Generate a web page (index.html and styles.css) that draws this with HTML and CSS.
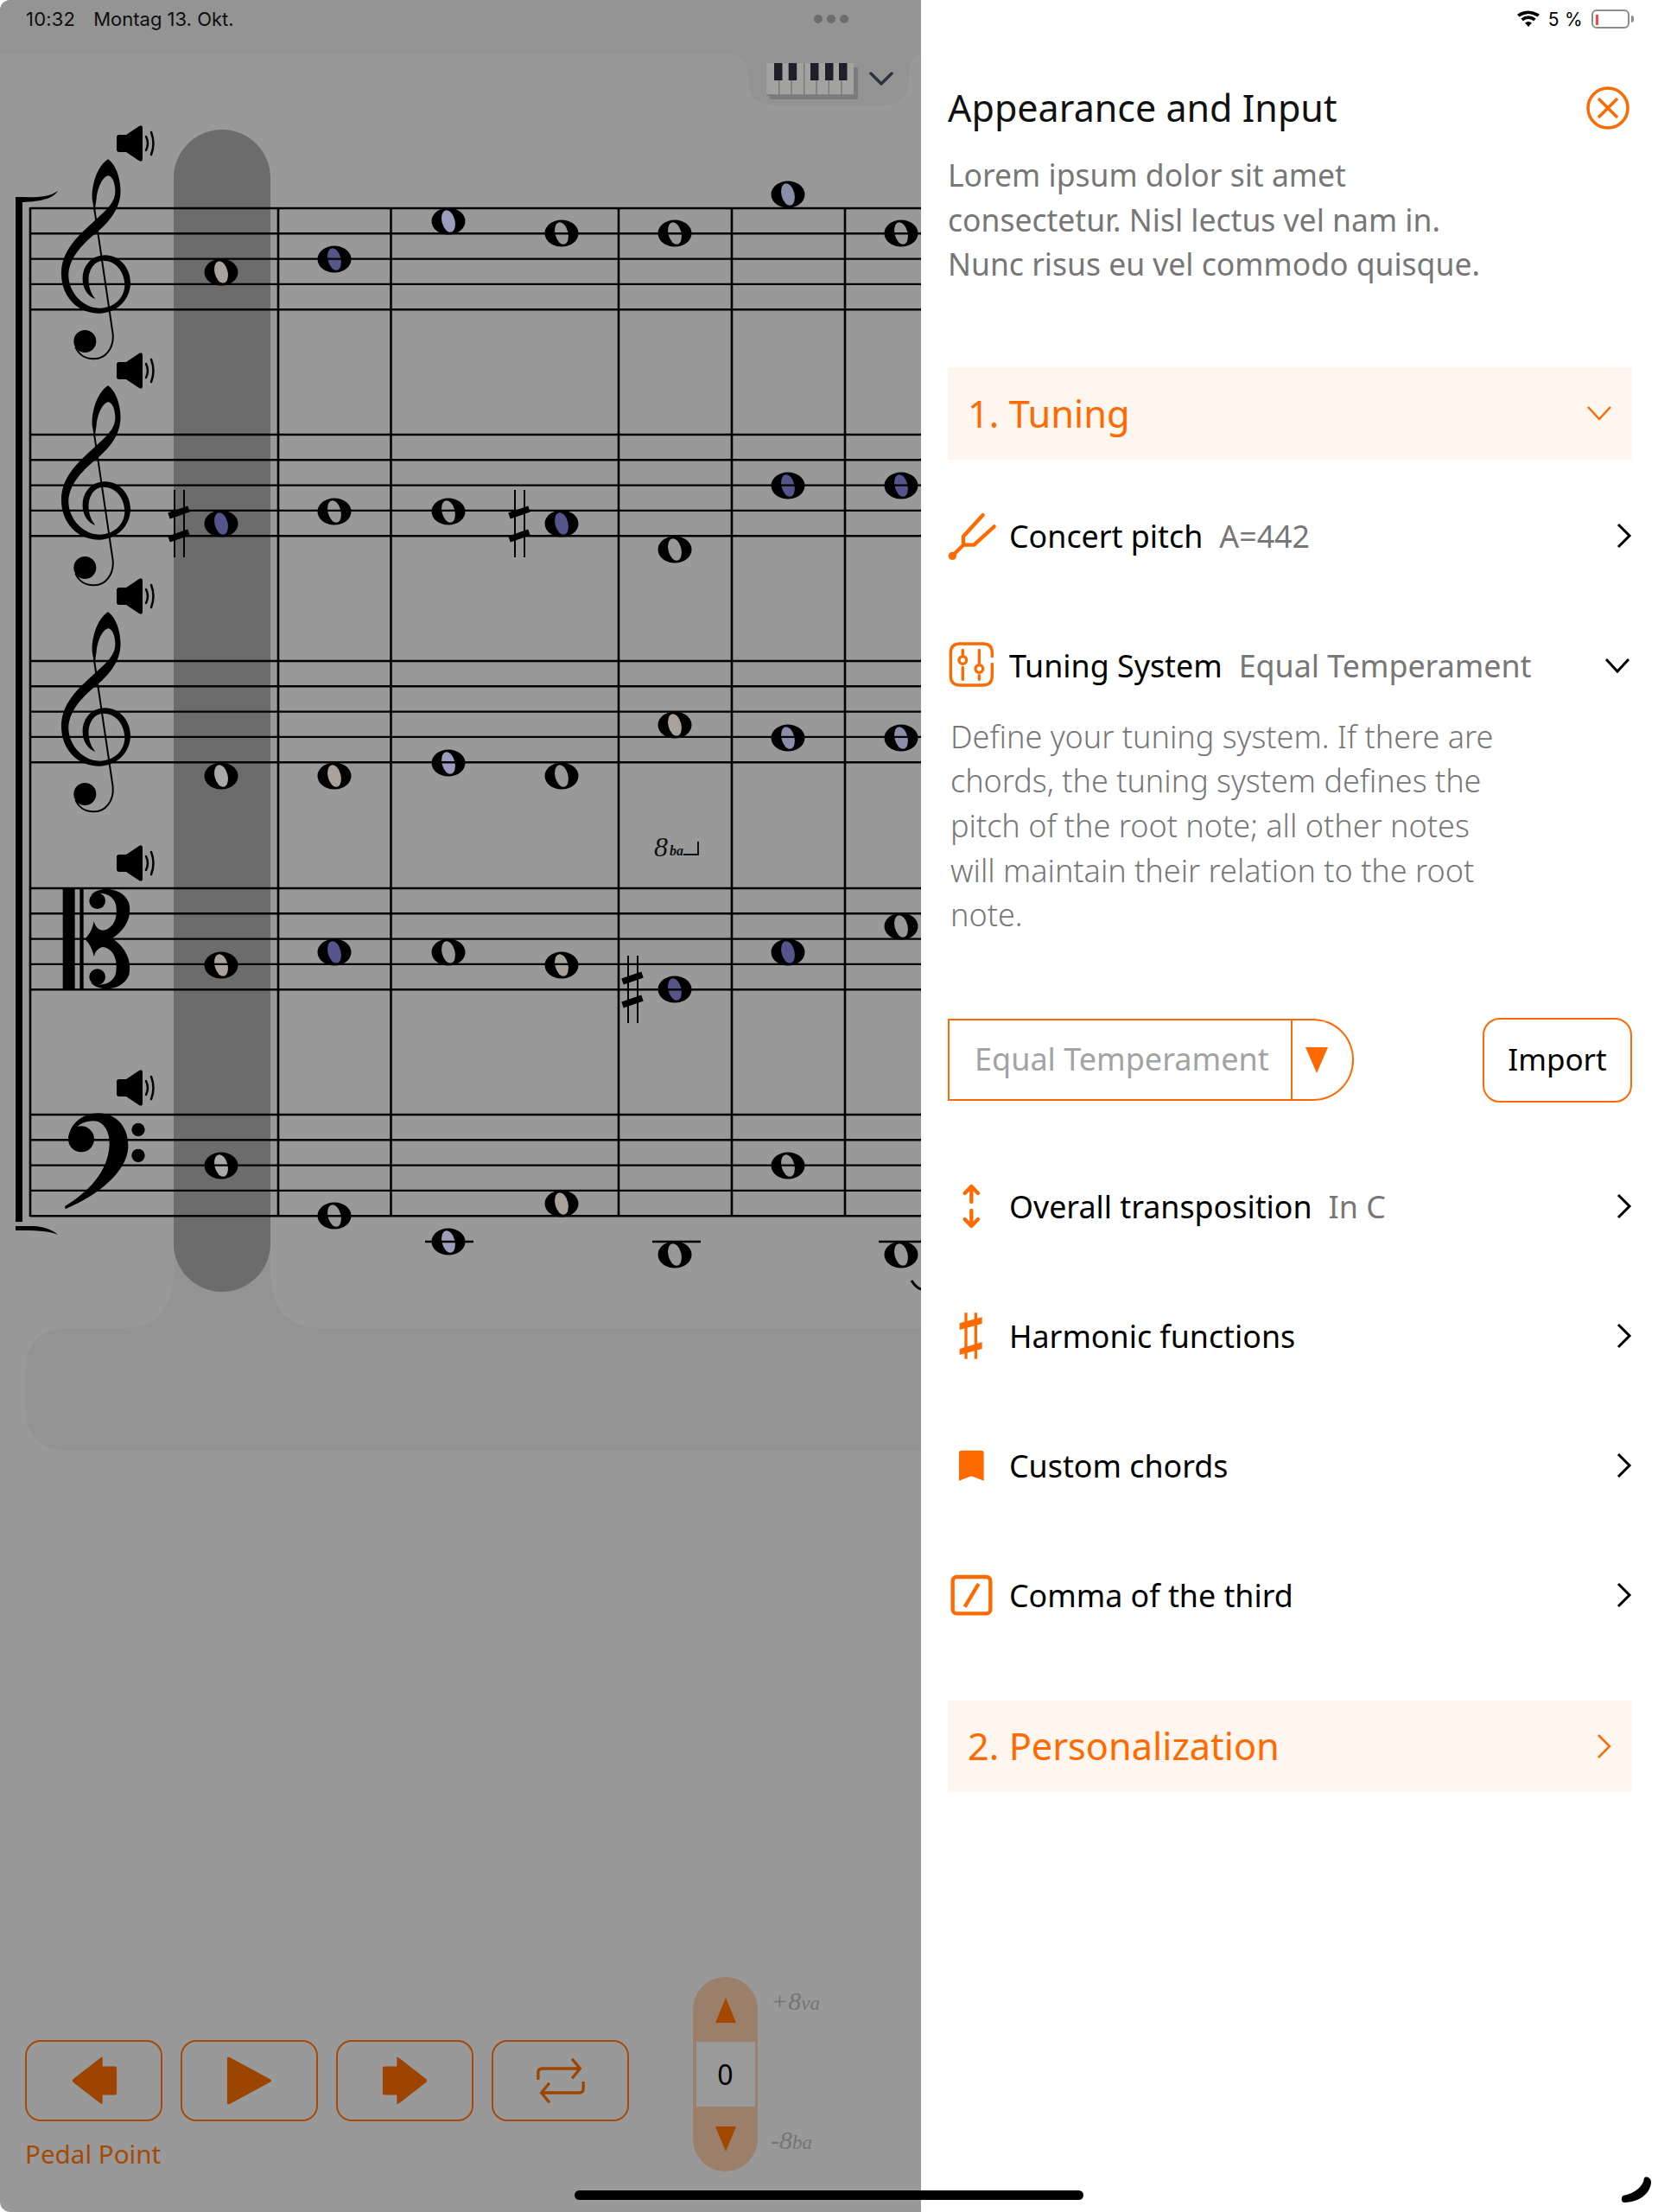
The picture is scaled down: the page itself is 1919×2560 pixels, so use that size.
FILE: index.html
```html
<!DOCTYPE html>
<html lang="en">
<head>
<meta charset="utf-8">
<title>Appearance and Input</title>
<link rel="stylesheet" href="styles.css">
</head>
<body>
<div class="screen">
  <section class="score-pane">
    <header class="sys-left">
      <span class="time">10:32</span><span class="date">Montag 13. Okt.</span>
      <span class="dots"><i></i><i></i><i></i></span>
    </header>
    <svg class="score" width="1066" height="1618" viewBox="0 62 1066 1618" xmlns="http://www.w3.org/2000/svg">
      <defs>
        <g id="staff" class="lines">
          <path d="M35 0H1066M35 29.3H1066M35 58.6H1066M35 87.9H1066M35 117.2H1066"/>
        </g>
        <g id="note">
          <ellipse rx="19.5" ry="15.5" class="note-head"/>
          <ellipse rx="7.5" ry="13" transform="rotate(-14)" fill="currentColor"/>
        </g>
        <g id="sharp">
          <path class="sharp-v" d="M-5 -39V39M6 -39V39"/>
          <path class="sharp-b" d="M-11.500 -9L11.500 -17M-11.500 18L11.500 10"/>
        </g>
        <g id="speaker">
          <path class="solid" d="M0 -10H8L23 -20Q27 -22 27 -18V18Q27 22 23 20L8 10H0Q-3 10 -3 7V-7Q-3 -10 0 -10Z"/>
          <path class="spk-arc" d="M31 -8Q35 0 31 8M37 -13Q42 0 37 13"/>
        </g>
        <g id="treble" transform="scale(.3333)">
          <path class="solid" fill-rule="evenodd" d="M345 133C372 150 392 205 388 255C384 310 345 355 300 392C265 420 212 470 208 530C205 590 255 650 315 650C370 650 405 610 403 565C400 520 370 485 330 485C295 485 275 520 278 560C280 590 295 610 302 618C275 610 255 580 257 545C258 500 290 466 335 466C385 466 423 510 423 562C423 620 375 668 315 668C240 668 183 610 183 530C183 450 240 400 300 345C345 305 372 280 370 240C368 210 358 190 345 190C325 195 308 235 305 270L298 318L290 270C288 210 315 150 345 133Z"/>
          <path class="clef-stem" d="M297 300L362 740C366 790 335 828 295 826C265 825 245 815 232 785"/>
          <circle class="solid" cx="265" cy="765" r="39"/>
        </g>
      </defs>

      <path class="bar-shape" d="M1066 1537H372Q313 1537 313 1470V1300H201V1470Q201 1537 142 1537H80Q30 1537 30 1587V1629Q30 1679 80 1679H1066Z"/>
      <path class="bar-shape" d="M840 62Q866 62 866 88V92Q866 122 896 122H1022Q1052 122 1052 92V88Q1052 62 1066 62Z"/>
      <rect class="column" x="201" y="150" width="112" height="1345" rx="56"/>

      <g class="keys">
        <rect class="key-shadow" x="891" y="78" width="102" height="37" rx="2"/>
        <rect class="key-white" x="887" y="73" width="101" height="37"/>
        <path class="key-line" d="M901.700 92V110M916 92V110M930.700 73V110M945 92V110M959.300 92V110M974 92V110M887 110H988"/>
        <rect class="key-black" x="896" y="73" width="9.500" height="20"/>
        <rect class="key-black" x="912.700" y="73" width="9.500" height="20"/>
        <rect class="key-black" x="938" y="73" width="9.500" height="20"/>
        <rect class="key-black" x="955" y="73" width="9.500" height="20"/>
        <rect class="key-black" x="971" y="73" width="9.500" height="20"/>
      </g>
      <path class="keys-chev" d="M1008 85L1020 97L1032 85"/>

      <use href="#note" x="256" y="315" class="beige"/><use href="#note" x="387" y="300" class="blue"/><use href="#note" x="519" y="256" class="lilac"/><use href="#note" x="650" y="270" class="plain"/><use href="#note" x="781" y="270" class="plain"/><use href="#note" x="912" y="225" class="mauve"/><use href="#note" x="1043" y="270" class="plain"/>
      <use href="#note" x="256" y="606" class="blue"/><use href="#note" x="387" y="592" class="plain"/><use href="#note" x="519" y="592" class="plain"/><use href="#note" x="650" y="606" class="blue"/><use href="#note" x="781" y="636" class="plain"/><use href="#note" x="912" y="562" class="blue"/><use href="#note" x="1043" y="562" class="blue"/>
      <use href="#note" x="256" y="898" class="pale"/><use href="#note" x="387" y="898" class="beige"/><use href="#note" x="519" y="883" class="lilac"/><use href="#note" x="650" y="898" class="plain"/><use href="#note" x="781" y="839" class="beige"/><use href="#note" x="912" y="854" class="mauve"/><use href="#note" x="1043" y="854" class="mauve"/>
      <use href="#note" x="256" y="1117" class="beige"/><use href="#note" x="387" y="1102" class="blue"/><use href="#note" x="519" y="1102" class="plain"/><use href="#note" x="650" y="1117" class="beige"/><use href="#note" x="781" y="1145" class="blue"/><use href="#note" x="912" y="1102" class="blue"/><use href="#note" x="1043" y="1072" class="plain"/>
      <use href="#note" x="256" y="1349" class="pale"/><use href="#note" x="387" y="1407" class="plain"/><use href="#note" x="519" y="1437" class="lilac"/><use href="#note" x="650" y="1393" class="beige"/><use href="#note" x="781" y="1452" class="plain"/><use href="#note" x="912" y="1349" class="plain"/><use href="#note" x="1043" y="1452" class="plain"/>

      <use href="#staff" y="241"/><use href="#staff" y="503"/><use href="#staff" y="765"/><use href="#staff" y="1028"/><use href="#staff" y="1290"/>
      <path class="barlines" d="M35 240V1408M322 240V1408M452.500 240V1408M716 240V1408M847 240V1408M978 240V1408"/>
      <path class="ledger" d="M492 1437H548M755 1437H811M1017 1437H1066"/>
      <path class="tail" d="M1055 1482Q1060 1490 1066 1492"/>

      <path class="solid" d="M18 229H26V1414H18Z"/>
      <path class="solid" d="M18 228C35 228 55 230 67 221C60 232 40 234 18 234Z"/>
      <path class="solid" d="M18 1419H40C52 1420 62 1424 67 1429C55 1424 40 1424 18 1424Z"/>

      <use href="#treble" x="10" y="140"/><use href="#treble" x="10" y="402"/><use href="#treble" x="10" y="664"/>

      <use href="#speaker" x="138" y="166"/>
      <use href="#speaker" x="138" y="429"/>
      <use href="#speaker" x="138" y="690"/>
      <use href="#speaker" x="138" y="999"/>
      <use href="#speaker" x="138" y="1259"/>

      <use href="#sharp" x="207" y="606"/><use href="#sharp" x="601" y="606"/><use href="#sharp" x="732" y="1145"/>

      <g transform="translate(30 960) scale(.3333)">
        <rect class="solid" x="128" y="205" width="42" height="350"/>
        <rect class="solid" x="187" y="205" width="13" height="350"/>
        <path class="solid" d="M225 228C255 195 335 198 358 255C370 310 340 352 300 378C340 405 370 450 358 505C335 562 255 565 225 532C255 545 300 540 312 500C322 450 300 410 265 408C250 412 240 425 236 442C232 415 218 392 205 380C218 368 232 345 236 318C240 335 250 348 265 350C300 348 322 310 312 260C300 220 255 215 225 228Z"/>
        <circle class="solid" cx="248" cy="248" r="28"/><circle class="solid" cx="248" cy="512" r="28"/>
        <path class="solid" d="M148 1075C150 1020 200 985 250 985C320 985 358 1040 355 1105C350 1190 250 1270 137 1318L135 1308C215 1260 285 1190 290 1095C292 1050 270 1012 235 1012C205 1012 178 1025 170 1045Z"/>
        <circle class="solid" cx="192" cy="1075" r="45"/>
        <circle class="solid" cx="390" cy="1042" r="23"/><circle class="solid" cx="390" cy="1132" r="23"/>
      </g>

      <text class="ba-eight" x="757" y="991">8</text>
      <text class="ba-small" x="775" y="990">ba</text>
      <path class="ba-mark" d="M791 989H808V974"/>
    </svg>

    <div class="controls">
      <div class="transport">
        <div class="transport-row">
          <button class="tbtn" type="button"><svg width="56" height="56" viewBox="0 0 54 58"><path class="tfill" d="M37 1V12H52Q54 12 54 14V44Q54 46 52 46H37V56Q36 58 34 56L2 31Q0 29 2 27L34 2Q36 0 37 1Z"/></svg></button>
          <button class="tbtn" type="button"><svg width="56" height="56" viewBox="3 0 54 58"><path class="tfill" d="M3 2V56Q3 58 6 57L54 31Q58 29 54 27L6 1Q3 0 3 2Z"/></svg></button>
          <button class="tbtn" type="button"><svg width="56" height="56" viewBox="10 0 54 58"><path class="tfill" d="M27 1V12H12Q10 12 10 14V44Q10 46 12 46H27V56Q28 58 30 56L62 31Q64 29 62 27L30 2Q28 0 27 1Z"/></svg></button>
          <button class="tbtn" type="button"><svg width="56" height="54" viewBox="0 0 60 56"><path class="tstroke" d="M2 27V18Q2 13 7 13H54M44 1L54 13L44 25M58 29V38Q58 43 53 43H6M16 31L6 43L16 55"/></svg></button>
        </div>
        <div class="pedal">Pedal Point</div>
      </div>
      <div class="stepper">
        <svg class="tri" width="24" height="29" viewBox="0 0 24 29"><path d="M12 0L24 29H0Z"/></svg>
        <div class="stepper-val">0</div>
        <svg class="tri" width="24" height="29" viewBox="0 0 24 29"><path d="M0 0H24L12 29Z"/></svg>
      </div>
      <div class="octaves">
        <div class="oct">+8<small>va</small></div>
        <div class="oct">-8<small>ba</small></div>
      </div>
    </div>
  </section>

  <aside class="panel">
    <div class="sys-right">
      <svg width="26" height="18" viewBox="0 0 26 18"><path class="solid" d="M13 18L9 13.500Q13 10.500 17 13.500ZM6.800 11.300L4.300 8.500Q13 1.800 21.700 8.500L19.200 11.300Q13 6.500 6.800 11.300ZM2.500 6.500L0 3.700Q13 -4.500 26 3.700L23.500 6.500Q13 -.5 2.500 6.500Z"/></svg>
      <span class="pct">5 %</span>
      <span class="battery"><i></i></span><span class="nub"></span>
    </div>
    <div class="head">
      <h1>Appearance and Input</h1>
      <svg class="close" width="50" height="50" viewBox="0 0 50 50"><circle cx="25" cy="25" r="23"/><path d="M14 14L36 36M36 14L14 36"/></svg>
    </div>
    <p class="desc">Lorem ipsum dolor sit amet<br>consectetur. Nisl lectus vel nam in.<br>Nunc risus eu vel commodo quisque.</p>

    <div class="section sec-one">
      <span class="sec-title">1. Tuning</span>
      <svg width="28" height="16" viewBox="0 0 28 16"><path class="chev-o" d="M1 1L14 15L27 1"/></svg>
    </div>

    <div class="row row-first">
      <svg class="ico" width="54" height="54" viewBox="21 9 162 162"><circle class="ifill" cx="37" cy="160" r="14"/><path class="istroke" d="M37 160L75 122V92L143 18M75 122H112L182 58"/></svg>
      <span class="lbl">Concert pitch</span><span class="val">A=442</span>
      <svg class="chev" width="18" height="30" viewBox="0 0 18 30"><path d="M2 2L15 15L2 28"/></svg>
    </div>

    <div class="row row-open">
      <svg class="ico" width="54" height="54" viewBox="21 462 162 162"><path class="istroke thin" d="M175 512V500Q175 468 143 468H63Q31 468 31 500V580Q31 612 63 612H143Q175 612 175 580V538M73 490V505M73 550V592M130 490V538M130 578V592"/><circle class="istroke thin" cx="73" cy="525" r="13"/><circle class="istroke thin" cx="130" cy="555" r="13"/></svg>
      <span class="lbl">Tuning System</span><span class="val">Equal Temperament</span>
      <svg class="chev-d" width="30" height="18" viewBox="0 0 30 18"><path d="M2 2L15 16L28 2"/></svg>
    </div>
    <p class="help">Define your tuning system. If there are<br>chords, the tuning system defines the<br>pitch of the root note; all other notes<br>will maintain their relation to the root<br>note.</p>

    <div class="picker">
      <div class="select">
        <div class="select-text">Equal Temperament</div>
        <div class="select-arrow"><svg width="26" height="30" viewBox="0 0 26 30"><path d="M0 0H26L13 30Z"/></svg></div>
      </div>
      <button class="import" type="button">Import</button>
    </div>

    <div class="row row-after">
      <svg class="ico" width="54" height="54" viewBox="21 24 162 162"><path class="istroke" d="M103 90V38M80 60L103 36L126 60M103 120V172M80 150L103 174L126 150"/></svg>
      <span class="lbl">Overall transposition</span><span class="val">In C</span>
      <svg class="chev" width="18" height="30" viewBox="0 0 18 30"><path d="M2 2L15 15L2 28"/></svg>
    </div>
    <div class="row row-next">
      <svg class="ico" width="54" height="54" viewBox="21 459 162 162"><path class="istroke thin butt" d="M84 460V620M118 460V620"/><path class="ifill" d="M62 496L140 475V498L62 519ZM62 585L140 562V585L62 606Z"/></svg>
      <span class="lbl">Harmonic functions</span>
      <svg class="chev" width="18" height="30" viewBox="0 0 18 30"><path d="M2 2L15 15L2 28"/></svg>
    </div>
    <div class="row row-next">
      <svg class="ico" width="54" height="54" viewBox="21 892 162 162"><path class="ifill" d="M68 921H138Q146 921 146 929V1026L103 1010L60 1026V929Q60 921 68 921Z"/></svg>
      <span class="lbl">Custom chords</span>
      <svg class="chev" width="18" height="30" viewBox="0 0 18 30"><path d="M2 2L15 15L2 28"/></svg>
    </div>
    <div class="row row-next">
      <svg class="ico" width="54" height="54" viewBox="21 1330 162 162"><rect class="istroke heavy" x="38" y="1348" width="131" height="127" rx="14"/><path class="istroke heavy butt" d="M128 1372L80 1452"/></svg>
      <span class="lbl">Comma of the third</span>
      <svg class="chev" width="18" height="30" viewBox="0 0 18 30"><path d="M2 2L15 15L2 28"/></svg>
    </div>

    <div class="section sec-two">
      <span class="sec-title">2. Personalization</span>
      <svg width="18" height="30" viewBox="0 0 18 30"><path class="chev-o" d="M2 2L15 15L2 28"/></svg>
    </div>
  </aside>

  <div class="home-bar"></div>
  <svg class="pencil" width="34" height="30" viewBox="0 0 34 30"><path d="M26 1C25 10 16 18 2 21C-1 22 -1 29 3 29C20 29 34 18 34 5C34 0 27 -2 26 1Z"/></svg>
</div>
</body>
</html>
```

FILE: styles.css
```css
* { box-sizing: border-box; }
html, body { margin: 0; padding: 0; background: #fff; }
body { font-family: "Noto Sans", "Lato", sans-serif; color: #000; }
svg { display: block; overflow: visible; }

.screen { position: relative; display: flex; width: 1919px; height: 2560px; overflow: hidden; background: #fff; }

/* left dimmed score */
.score-pane { width: 1066px; height: 2560px; background: #999; border-radius: 12px 0 0 12px; overflow: hidden; }
.sys-left { display: flex; align-items: center; height: 62px; padding: 0 84px 18px 30px; background: #949494; font-family: "Inter", "Roboto", sans-serif; font-size: 22px; color: #0e0e0e; }
.time { letter-spacing: .2px; }
.date { margin-left: 21px; }
.dots { display: flex; gap: 5px; margin-left: auto; }
.dots i { display: block; width: 10px; height: 10px; border-radius: 50%; background: #6c6c6c; }

.solid { fill: #000; }
.bar-shape { fill: #939393; }
.column { fill: #6c6c6c; }
.lines path { stroke: #000; stroke-width: 2.4; fill: none; }
.barlines { stroke: #000; stroke-width: 2.6; fill: none; }
.ledger { stroke: #000; stroke-width: 2.4; fill: none; }
.tail { stroke: #000; stroke-width: 3; fill: none; }
.note-head { fill: #000; }
.plain { color: #999; }
.pale { color: #a9a9a9; }
.beige { color: #a9a29b; }
.lilac { color: #9c9cbc; }
.mauve { color: #8c8cab; }
.blue { color: #55558c; }
.sharp-v { stroke: #000; stroke-width: 2; fill: none; }
.sharp-b { stroke: #000; stroke-width: 7.500; fill: none; }
.spk-arc { stroke: #000; stroke-width: 2.500; fill: none; stroke-linecap: round; }
.clef-stem { stroke: #000; stroke-width: 6; fill: none; }
.key-shadow { fill: #7b7b7b; }
.key-white { fill: #a2a2a0; }
.key-line { stroke: #7b7b7b; stroke-width: 1.500; fill: none; }
.key-black { fill: #1f1f2a; }
.keys-chev { stroke: #2e343f; stroke-width: 3.500; fill: none; stroke-linecap: round; stroke-linejoin: round; }
.ba-eight { font-family: "Liberation Serif", serif; font-style: italic; font-size: 32px; fill: #111; }
.ba-small { font-family: "Liberation Serif", serif; font-style: italic; font-weight: 700; font-size: 16px; fill: #111; }
.ba-mark { stroke: #111; stroke-width: 2; fill: none; }

/* bottom controls */
.controls { display: flex; align-items: flex-start; padding: 608px 0 0 29px; }
.transport { display: flex; flex-direction: column; margin-top: 73px; }
.transport-row { display: flex; gap: 21px; }
.tbtn { display: flex; align-items: center; justify-content: center; width: 159px; height: 94px; padding: 0; border: 2px solid #a54c0c; border-radius: 18px; background: transparent; }
.tfill { fill: #9c4400; }
.tstroke { fill: none; stroke: #9c4400; stroke-width: 3.500; }
.pedal { margin-top: 18px; font-size: 29.600px; line-height: 40px; color: #a34a06; }
.stepper { display: flex; flex-direction: column; align-items: center; width: 75px; height: 225px; margin-left: 74px; padding-top: 24px; border-radius: 38px; background: #9c7f6b; }
.stepper .tri path { fill: #a34800; }
.stepper-val { display: flex; align-items: center; justify-content: center; width: 68px; height: 75px; margin: 22px 0 23px; background: #9a9a9a; font-size: 32px; color: #000; }
.octaves { display: flex; flex-direction: column; justify-content: space-between; height: 200px; margin: 10px 0 0 15px; }
.oct { font-family: "Liberation Serif", serif; font-style: italic; font-size: 30px; line-height: 36px; color: #757575; }
.oct small { font-size: 23px; }

/* right panel */
.panel { display: flex; flex-direction: column; width: 853px; padding: 0 30px 0 31px; background: #fff; }
.sys-right { display: flex; align-items: center; justify-content: flex-end; gap: 10px; height: 44px; margin-right: -2px; font-family: "Inter", "Roboto", sans-serif; font-size: 21px; color: #000; }
.pct { letter-spacing: .3px; }
.battery { display: block; width: 44px; height: 22px; padding: 4px 0 0 3px; border: 2px solid #8d8d8d; border-radius: 6px; }
.battery i { display: block; width: 3px; height: 12px; background: #f44; }
.nub { display: block; width: 3px; height: 8px; margin-left: -8px; border-radius: 0 3px 3px 0; background: #8d8d8d; }
.head { display: flex; align-items: center; justify-content: space-between; height: 60px; margin-top: 51px; padding-right: 3px; }
h1 { margin: -2px 0 0; font-size: 43px; font-weight: 400; color: #111; }
.close circle, .close path { fill: none; stroke: #ff6a00; stroke-width: 3.500; }
.desc { margin: 22px 0 0; font-size: 35.500px; line-height: 51.600px; color: #777; font-weight: 400; white-space: nowrap; }

.section { display: flex; align-items: center; justify-content: space-between; background: #fff6f0; }
.sec-one { height: 107px; margin-top: 93px; padding: 0 24px 0 23px; }
.sec-two { height: 106px; margin-top: 72px; padding: 0 23px 0 23px; }
.sec-title { font-size: 43.300px; color: #ff6a00; }
.chev-o { fill: none; stroke: #ff6a00; stroke-width: 2.500; }

.row { display: flex; align-items: center; height: 100px; }
.row-first { margin-top: 38px; }
.row-open { margin-top: 50px; }
.row-after { margin-top: 70px; }
.row-next { margin-top: 50px; }
.ico { flex: none; margin-right: 17px; }
.istroke { fill: none; stroke: #ff6a00; stroke-width: 13; stroke-linecap: round; stroke-linejoin: round; }
.istroke.thin { stroke-width: 10; }
.istroke.heavy { stroke-width: 13; }
.istroke.butt { stroke-linecap: butt; }
.ifill { fill: #ff6a00; }
.lbl { font-size: 35.800px; color: #000; }
.val { margin-left: 19px; font-size: 35.800px; color: #777; }
.chev { margin-left: auto; }
.chev path { fill: none; stroke: #000; stroke-width: 3; }
.chev-d { margin: 0 2px 0 auto; }
.chev-d path { fill: none; stroke: #000; stroke-width: 3; }

.help { margin: 7px 0 0 3px; font-size: 36px; font-weight: 300; line-height: 51.600px; color: #777; white-space: nowrap; }

.picker { display: flex; align-items: center; justify-content: space-between; height: 98px; margin-top: 93px; }
.select { display: flex; height: 95px; }
.select-text { display: flex; align-items: center; width: 399px; padding: 0 0 3px 29px; border: 2px solid #ff6a00; font-size: 36px; color: #a3a3a3; }
.select-arrow { display: flex; align-items: center; width: 71px; padding-left: 15px; border: 2px solid #ff6a00; border-left: 0; border-radius: 0 47px 47px 0; }
.select-arrow path { fill: #ff6a00; }
.import { width: 173px; height: 98px; padding: 0 0 3px; border: 2px solid #ff6a00; border-radius: 20px; background: #fff; font-family: inherit; font-size: 35px; color: #000; }

.home-bar { position: absolute; left: 665px; top: 2535px; width: 589px; height: 11px; border-radius: 6px; background: #000; }
.pencil { position: absolute; left: 1877px; top: 2520px; }
.pencil path { fill: #000; }
```
